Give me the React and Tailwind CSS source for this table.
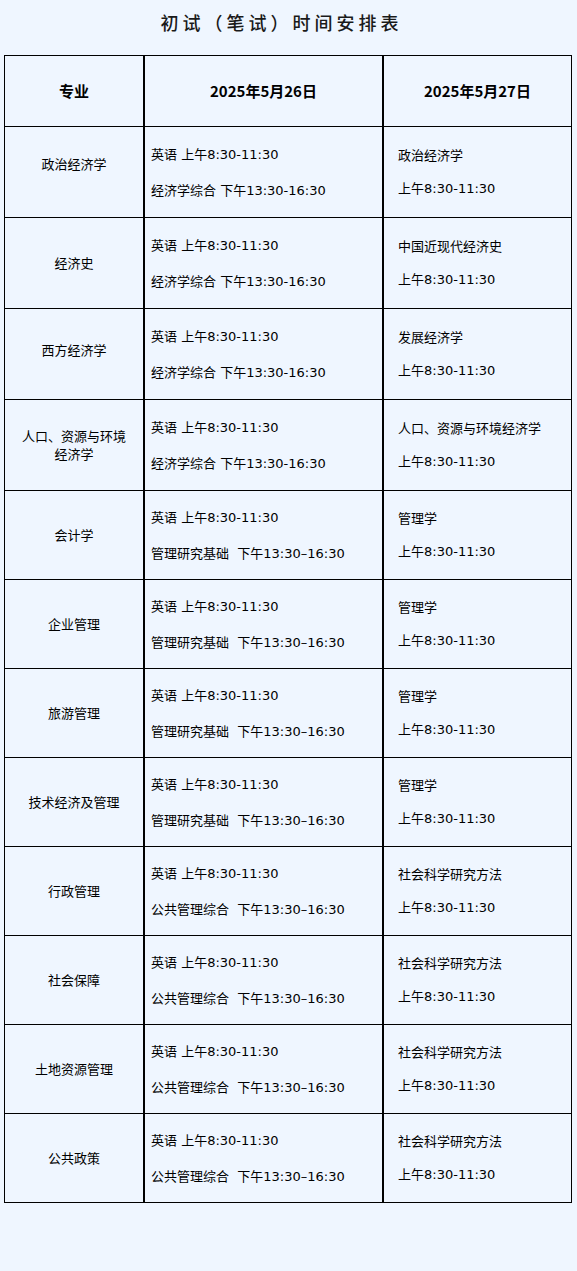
import React from "react";

const rows = [
  { name: ["政治经济学"], a: "经济学综合 下午13:30-16:30", b: "政治经济学", h: "h-[91px]", pad: "pb-4" },
  { name: ["经济史"], a: "经济学综合 下午13:30-16:30", b: "中国近现代经济史", h: "h-[91px]", pad: "" },
  { name: ["西方经济学"], a: "经济学综合 下午13:30-16:30", b: "发展经济学", h: "h-[91px]", pad: "pb-2" },
  { name: ["人口、资源与环境", "经济学"], a: "经济学综合 下午13:30-16:30", b: "人口、资源与环境经济学", h: "h-[91px]", pad: "" },
  { name: ["会计学"], a: "管理研究基础  下午13:30–16:30", b: "管理学", h: "h-[89px]", pad: "" },
  { name: ["企业管理"], a: "管理研究基础  下午13:30–16:30", b: "管理学", h: "h-[89px]", pad: "" },
  { name: ["旅游管理"], a: "管理研究基础  下午13:30–16:30", b: "管理学", h: "h-[89px]", pad: "" },
  { name: ["技术经济及管理"], a: "管理研究基础  下午13:30–16:30", b: "管理学", h: "h-[89px]", pad: "" },
  { name: ["行政管理"], a: "公共管理综合  下午13:30–16:30", b: "社会科学研究方法", h: "h-[89px]", pad: "" },
  { name: ["社会保障"], a: "公共管理综合  下午13:30–16:30", b: "社会科学研究方法", h: "h-[89px]", pad: "" },
  { name: ["土地资源管理"], a: "公共管理综合  下午13:30–16:30", b: "社会科学研究方法", h: "h-[89px]", pad: "" },
  { name: ["公共政策"], a: "公共管理综合  下午13:30–16:30", b: "社会科学研究方法", h: "h-[89px]", pad: "" },
];

export default function App() {
  return (
    <div className="min-h-[1271px] w-[577px] bg-[#eff6ff] font-['Noto_Sans_CJK_SC','Noto_Sans',sans-serif] text-black">
      <h1 className="flex h-[43px] items-center justify-center pr-[14px] pt-[1px] text-[18px] font-medium tracking-[4px] text-[#1a1a1a]">
        初试（笔试）时间安排表
      </h1>
      <div className="ml-[4px] mt-[12px] w-[568px] border border-black">
        <div className="grid h-[70px] grid-cols-[138px_239px_189px] text-[15px] font-bold">
          <div className="flex items-center justify-center">专业</div>
          <div className="flex items-center justify-center border-l-2 border-black">2025年5月26日</div>
          <div className="flex items-center justify-center border-l-2 border-black">2025年5月27日</div>
        </div>
        {rows.map((r, i) => (
          <div key={i} className={`grid grid-cols-[138px_239px_189px] border-t border-black text-[13px] ${r.h}`}>
            <div className={`flex flex-col items-center justify-center text-center leading-[18px] ${r.pad}`}>
              {r.name.map((n) => (
                <span key={n}>{n}</span>
              ))}
            </div>
            <div className="flex flex-col justify-center gap-[18px] border-l-2 border-black pl-[6px] pt-[2px] font-['DejaVu_Sans','Noto_Sans_CJK_SC',sans-serif] leading-[18px]">
              <span className="whitespace-pre">英语 上午8:30-11:30</span>
              <span className="whitespace-pre">{r.a}</span>
            </div>
            <div className="flex flex-col justify-center gap-[15px] border-l-2 border-black pl-[14px] font-['DejaVu_Sans','Noto_Sans_CJK_SC',sans-serif] leading-[18px]">
              <span>{r.b}</span>
              <span>上午8:30-11:30</span>
            </div>
          </div>
        ))}
      </div>
    </div>
  );
}
